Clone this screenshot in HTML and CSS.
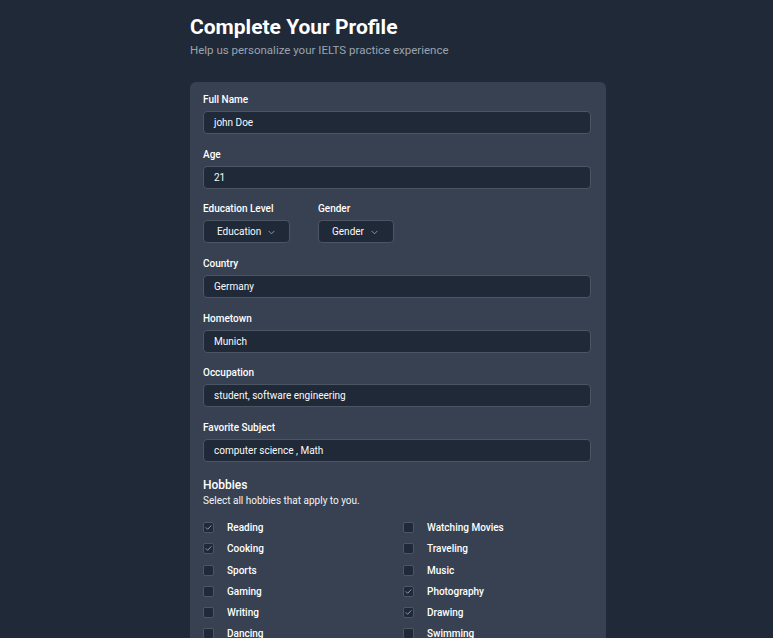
FILE: index.html
```html
<!DOCTYPE html>
<html lang="en">
<head>
<meta charset="utf-8">
<title>Complete Your Profile</title>
<link rel="stylesheet" href="styles.css">
</head>
<body>
<main class="page">
  <h1 class="title">Complete Your Profile</h1>
  <p class="subtitle">Help us personalize your IELTS practice experience</p>

  <form class="card">
    <div class="field">
      <label class="label">Full Name</label>
      <div class="input">john Doe</div>
    </div>
    <div class="field">
      <label class="label">Age</label>
      <div class="input">21</div>
    </div>
    <div class="field row">
      <div class="col">
        <label class="label">Education Level</label>
        <div class="select select-edu">Education
          <svg class="chev" viewBox="0 0 8 5" width="7" height="5"><path d="M1 1l3 3 3-3" fill="none" stroke="currentColor" stroke-width="1" stroke-linecap="round" stroke-linejoin="round"/></svg>
        </div>
      </div>
      <div class="col">
        <label class="label">Gender</label>
        <div class="select select-gender">Gender
          <svg class="chev" viewBox="0 0 8 5" width="7" height="5"><path d="M1 1l3 3 3-3" fill="none" stroke="currentColor" stroke-width="1" stroke-linecap="round" stroke-linejoin="round"/></svg>
        </div>
      </div>
    </div>
    <div class="field">
      <label class="label">Country</label>
      <div class="input">Germany</div>
    </div>
    <div class="field">
      <label class="label">Hometown</label>
      <div class="input">Munich</div>
    </div>
    <div class="field">
      <label class="label">Occupation</label>
      <div class="input">student, software engineering</div>
    </div>
    <div class="field">
      <label class="label">Favorite Subject</label>
      <div class="input">computer science , Math</div>
    </div>

    <section class="hobbies">
      <h2 class="hobbies-title">Hobbies</h2>
      <p class="hobbies-sub">Select all hobbies that apply to you.</p>
      <div class="grid">
        <div class="opt"><span class="box checked"><svg viewBox="0 0 10 10" width="9" height="9"><path d="M2.2 5.2l1.8 1.8 3.8-4" fill="none" stroke="currentColor" stroke-width="1" stroke-linecap="round" stroke-linejoin="round"/></svg></span>Reading</div>
        <div class="opt"><span class="box"></span>Watching Movies</div>
        <div class="opt"><span class="box checked"><svg viewBox="0 0 10 10" width="9" height="9"><path d="M2.2 5.2l1.8 1.8 3.8-4" fill="none" stroke="currentColor" stroke-width="1" stroke-linecap="round" stroke-linejoin="round"/></svg></span>Cooking</div>
        <div class="opt"><span class="box"></span>Traveling</div>
        <div class="opt"><span class="box"></span>Sports</div>
        <div class="opt"><span class="box"></span>Music</div>
        <div class="opt"><span class="box"></span>Gaming</div>
        <div class="opt"><span class="box checked"><svg viewBox="0 0 10 10" width="9" height="9"><path d="M2.2 5.2l1.8 1.8 3.8-4" fill="none" stroke="currentColor" stroke-width="1" stroke-linecap="round" stroke-linejoin="round"/></svg></span>Photography</div>
        <div class="opt"><span class="box"></span>Writing</div>
        <div class="opt"><span class="box checked"><svg viewBox="0 0 10 10" width="9" height="9"><path d="M2.2 5.2l1.8 1.8 3.8-4" fill="none" stroke="currentColor" stroke-width="1" stroke-linecap="round" stroke-linejoin="round"/></svg></span>Drawing</div>
        <div class="opt"><span class="box"></span>Dancing</div>
        <div class="opt"><span class="box"></span>Swimming</div>
      </div>
    </section>
  </form>
</main>
</body>
</html>
```

FILE: styles.css
```css
* { box-sizing: border-box; }

html, body {
  margin: 0;
  padding: 0;
  background: #1f2937;
  height: 100%;
  overflow: hidden;
}

body {
  font-family: Roboto, "Liberation Sans", sans-serif;
  color: #f3f4f6;
}

.page {
  width: 416px;
  margin-left: 190px;
  padding-top: 13px;
}

.title {
  margin: 0;
  font-size: 21px;
  line-height: 28px;
  font-weight: 700;
  color: #ffffff;
}

.subtitle {
  margin: 1px 0 0;
  font-size: 11.5px;
  line-height: 16px;
  color: #9ca3af;
}

.card {
  margin-top: 24px;
  background: #374151;
  border-radius: 6px;
  padding: 10px 15px 40px 13px;
}

.field {
  margin-bottom: 12.7px;
}

.label {
  display: block;
  font-size: 10px;
  line-height: 16px;
  font-weight: 500;
  color: #ffffff;
  margin-bottom: 3px;
}

.input {
  height: 23px;
  background: #1f2937;
  border: 1px solid #4b5563;
  border-radius: 4px;
  padding: 0 10px;
  font-size: 10px;
  line-height: 21px;
  color: #f9fafb;
}

.row {
  display: flex;
  gap: 28px;
}

.select {
  display: inline-flex;
  align-items: center;
  height: 23px;
  background: #1f2937;
  border: 1px solid #4b5563;
  border-radius: 4px;
  font-size: 10px;
  color: #f9fafb;
  padding: 0 0 0 13px;
}

.select-edu { width: 87px; }
.select-gender { width: 76px; }

.chev {
  flex: none;
  color: #9ca3af;
  margin-left: 7px;
  margin-top: 1px;
}

.hobbies {
  margin-top: 15px;
}

.hobbies-title {
  margin: 0;
  font-size: 12px;
  line-height: 16px;
  font-weight: 500;
  color: #ffffff;
}

.hobbies-sub {
  margin: 0 0 8px;
  font-size: 10px;
  line-height: 16px;
  color: #f3f4f6;
}

.grid {
  display: grid;
  grid-template-columns: 1fr 1fr;
  column-gap: 12px;
}

.opt {
  display: flex;
  align-items: center;
  height: 21.2px;
  font-size: 10px;
  font-weight: 500;
  color: #ffffff;
}

.box {
  width: 11px;
  height: 11px;
  flex: none;
  border: 1px solid #4b5563;
  background: #1f2937;
  border-radius: 2px;
  margin-right: 13px;
  display: flex;
  align-items: center;
  justify-content: center;
  color: #9ca3af;
}
```
